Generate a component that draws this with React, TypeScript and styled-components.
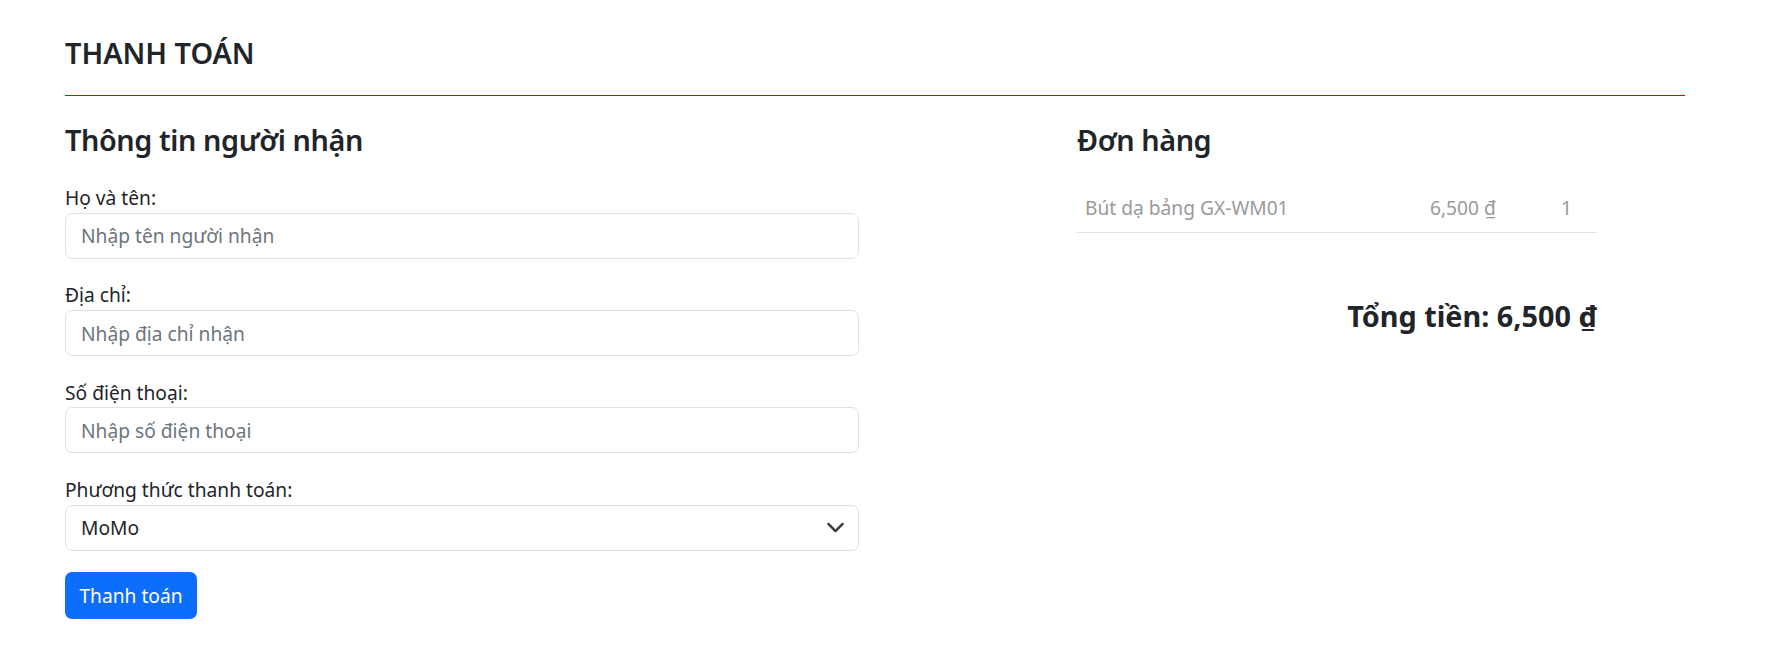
import React from "react";
import styled, { createGlobalStyle } from "styled-components";

const Global = createGlobalStyle`
  html, body {
    margin: 0;
    padding: 0;
    background: #fff;
  }
  body {
    font-family: "Noto Sans", "Open Sans", sans-serif;
    color: #212529;
  }
  * {
    box-sizing: border-box;
  }
`;

const Page = styled.div`
  width: 1620px;
  margin-left: 65px;
  padding-bottom: 30px;
`;

const Title = styled.h1`
  margin: 35.5px 0 0;
  font-size: 28.8px;
  line-height: 1.2;
  font-weight: 600;
  text-transform: uppercase;
`;

const RedRule = styled.hr`
  margin: 25px 0 0;
  border: 0;
  border-top: 1px solid #e00000;
`;

const Row = styled.div`
  display: flex;
  gap: 218px;
  margin-top: 26.5px;
`;

const FormCol = styled.form`
  width: 794px;
  display: flex;
  flex-direction: column;
`;

const OrderCol = styled.div`
  width: 520px;
  display: flex;
  flex-direction: column;
`;

const Heading = styled.h2`
  margin: 0;
  font-size: 28.8px;
  line-height: 1.2;
  font-weight: 600;
  letter-spacing: -0.4px;
`;

const Group = styled.div<{ $first?: boolean }>`
  display: flex;
  flex-direction: column;
  margin-top: ${(p) => (p.$first ? "27px" : "22.5px")};
`;

const Label = styled.label`
  font-size: 19.2px;
  line-height: 28.8px;
  color: #212529;
`;

const Field = styled.input`
  height: 46px;
  width: 100%;
  padding: 0 15px;
  font-family: inherit;
  font-size: 19.2px;
  color: #212529;
  border: 1px solid #dee2e6;
  border-radius: 7px;
  outline: none;
  background: #fff;

  &::placeholder {
    color: #6c757d;
  }
`;

const SelectWrap = styled.div`
  position: relative;
`;

const Select = styled.select`
  appearance: none;
  height: 46px;
  width: 100%;
  padding: 0 50px 0 15px;
  font-family: inherit;
  font-size: 19.2px;
  color: #212529;
  border: 1px solid #dee2e6;
  border-radius: 7px;
  background: #fff;
  outline: none;
`;

const Chevron = styled.svg`
  position: absolute;
  right: 14px;
  top: 50%;
  width: 19px;
  height: 19px;
  margin-top: -9.5px;
  pointer-events: none;
`;

const PayButton = styled.button`
  align-self: flex-start;
  margin-top: 21.5px;
  height: 47px;
  width: 132px;
  border: 0;
  border-radius: 7px;
  background: #0d6efd;
  color: #fff;
  font-family: inherit;
  font-size: 19.2px;
  cursor: pointer;
`;

const Table = styled.table`
  margin-top: 27px;
  width: 520px;
  border-collapse: collapse;
`;

const Cell = styled.td<{ $w: number }>`
  width: ${(p) => p.$w}px;
  padding: 9.6px 8px;
  font-size: 19.2px;
  line-height: 28.8px;
  color: #9a9a9a;
  border-bottom: 1px solid #dee2e6;
  white-space: nowrap;
`;

const Total = styled.div`
  margin-top: 66px;
  text-align: right;
  font-size: 28.8px;
  line-height: 1.2;
  font-weight: 700;
`;

const fields = [
  { id: "name", label: "Họ và tên:", placeholder: "Nhập tên người nhận" },
  { id: "address", label: "Địa chỉ:", placeholder: "Nhập địa chỉ nhận" },
  { id: "phone", label: "Số điện thoại:", placeholder: "Nhập số điện thoại" },
];

export default function App() {
  return (
    <>
      <Global />
      <Page>
        <Title>Thanh toán</Title>
        <RedRule />
        <Row>
          <FormCol onSubmit={(e) => e.preventDefault()}>
            <Heading>Thông tin người nhận</Heading>
            {fields.map((f, i) => (
              <Group key={f.id} $first={i === 0}>
                <Label htmlFor={f.id}>{f.label}</Label>
                <Field id={f.id} placeholder={f.placeholder} />
              </Group>
            ))}
            <Group>
              <Label htmlFor="method">Phương thức thanh toán:</Label>
              <SelectWrap>
                <Select id="method" defaultValue="momo">
                  <option value="momo">MoMo</option>
                  <option value="cod">Thanh toán khi nhận hàng</option>
                </Select>
                <Chevron viewBox="0 0 16 16">
                  <path
                    d="m2 5 6 6 6-6"
                    fill="none"
                    stroke="#343a40"
                    strokeWidth="2"
                    strokeLinecap="round"
                    strokeLinejoin="round"
                  />
                </Chevron>
              </SelectWrap>
            </Group>
            <PayButton type="submit">Thanh toán</PayButton>
          </FormCol>
          <OrderCol>
            <Heading>Đơn hàng</Heading>
            <Table>
              <tbody>
                <tr>
                  <Cell $w={345}>Bút dạ bảng GX-WM01</Cell>
                  <Cell $w={131}>6,500 ₫</Cell>
                  <Cell $w={44}>1</Cell>
                </tr>
              </tbody>
            </Table>
            <Total>Tổng tiền: 6,500 ₫</Total>
          </OrderCol>
        </Row>
      </Page>
    </>
  );
}
